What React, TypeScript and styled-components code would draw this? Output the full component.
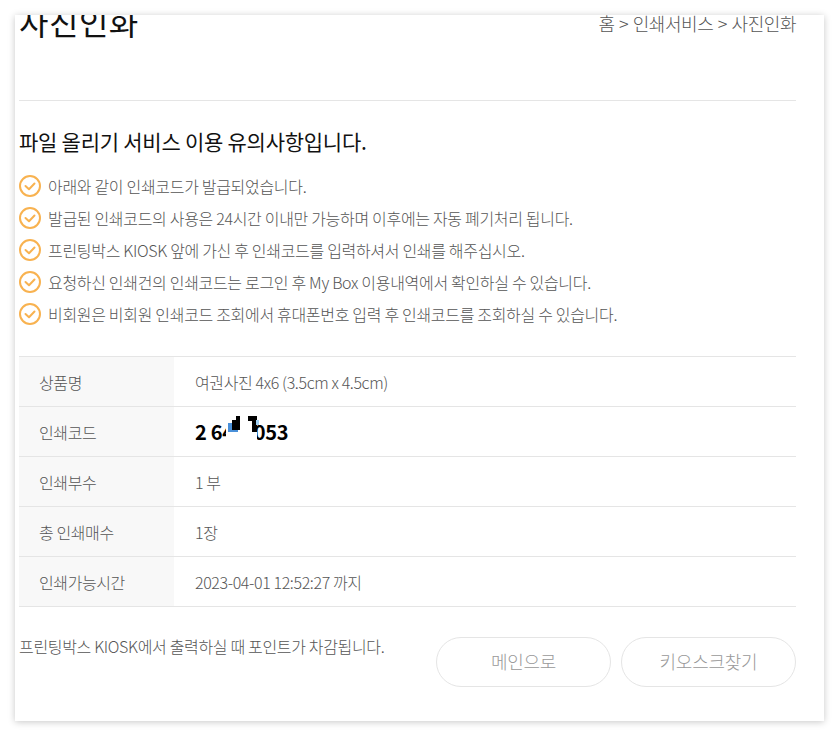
import styled, { createGlobalStyle } from "styled-components";

const GlobalStyle = createGlobalStyle`
    html, body {
        margin: 0;
        padding: 0;
        background: #fff;
        font-family: "Noto Sans CJK KR", "Noto Sans", sans-serif;
    }
`;

const Page = styled.div`
    width: 839px;
    height: 736px;
    padding: 15px;
    box-sizing: border-box;
`;

const Card = styled.div`
    height: 706px;
    width: 809px;
    box-sizing: border-box;
    padding: 0 28px 0 4px;
    background: #fff;
    overflow: hidden;
    box-shadow: 0 1px 7px rgba(0, 0, 0, 0.22);
`;

const Header = styled.div`
    display: flex;
    justify-content: space-between;
    align-items: flex-start;
    height: 86px;
    box-sizing: border-box;
    border-bottom: 1px solid #e5e5e5;
`;

const Title = styled.h1`
    margin: -17px 0 0 0;
    font-size: 32px;
    line-height: 46px;
    font-weight: 400;
    letter-spacing: 0.5px;
    color: #111;
`;

const Crumbs = styled.div`
    margin-top: -5px;
    font-size: 18px;
    line-height: 26px;
    font-weight: 300;
    letter-spacing: -0.45px;
    color: #555;
`;

const Sep = styled.span`
    margin: 0 1px;
`;

const Notice = styled.h2`
    margin: 26px 0 0 0;
    font-size: 21px;
    line-height: 28px;
    font-weight: 400;
    letter-spacing: -0.25px;
    color: #111;
`;

const NoteList = styled.ul`
    list-style: none;
    margin: 15px 0 0 0;
    padding: 0 0 26px 0;
    border-bottom: 1px solid #e5e5e5;
`;

const Note = styled.li`
    display: flex;
    align-items: center;
    gap: 7px;
    height: 32px;
    font-size: 16px;
    font-weight: 300;
    letter-spacing: -0.31px;
    color: #555;
`;

const Row = styled.div`
    display: flex;
    height: 50px;
    box-sizing: border-box;
    border-bottom: 1px solid #e5e5e5;
`;

const Label = styled.div`
    display: flex;
    align-items: center;
    width: 155px;
    box-sizing: border-box;
    padding-left: 20px;
    background: #f8f8f8;
    font-size: 16px;
    font-weight: 300;
    letter-spacing: -0.4px;
    color: #555;
`;

const Value = styled.div<{ $code?: boolean }>`
    position: relative;
    display: flex;
    align-items: center;
    padding-left: 21px;
    font-size: ${(p) => (p.$code ? "20px" : "16px")};
    font-weight: ${(p) => (p.$code ? 700 : 300)};
    letter-spacing: ${(p) => (p.$code ? "-0.3px" : "-0.38px")};
    color: ${(p) => (p.$code ? "#000" : "#555")};
`;

// the code is masked in the screenshot, a white patch with a few leftover blocks
const Redact = styled.span`
    position: absolute;
    left: 52px;
    top: 3px;
    width: 31px;
    height: 36px;
    background: #fff;
`;

const Speck = styled.span<{ $color: string; $x: number; $y: number; $w: number; $h: number }>`
    position: absolute;
    left: ${(p) => p.$x}px;
    top: ${(p) => p.$y}px;
    width: ${(p) => p.$w}px;
    height: ${(p) => p.$h}px;
    background: ${(p) => p.$color};
`;

const Footer = styled.div`
    display: flex;
    justify-content: space-between;
    align-items: flex-start;
    margin-top: 30px;
`;

const FootText = styled.p`
    margin: -2px 0 0 0;
    font-size: 16px;
    line-height: 22px;
    font-weight: 300;
    letter-spacing: -0.33px;
    color: #555;
`;

const Buttons = styled.div`
    display: flex;
    gap: 10px;
`;

const PillButton = styled.button`
    width: 175px;
    height: 50px;
    box-sizing: border-box;
    border: 1px solid #e5e5e5;
    border-radius: 25px;
    background: #fff;
    font-family: inherit;
    font-size: 18px;
    font-weight: 300;
    letter-spacing: -0.25px;
    line-height: 24px;
    padding: 0 0 2px;
    color: #999;
`;

const CheckSvg = styled.svg`
    flex-shrink: 0;
`;

function CheckIcon() {
    return (
        <CheckSvg width="22" height="22" viewBox="0 0 22 22" fill="none" stroke="#f8b250" strokeWidth="2" strokeLinecap="round" strokeLinejoin="round">
            <circle cx="11" cy="11" r="10" />
            <path d="M6.5 11 L10 14.2 L15.5 8.5" />
        </CheckSvg>
    );
}

const notes = [
    "아래와 같이 인쇄코드가 발급되었습니다.",
    "발급된 인쇄코드의 사용은 24시간 이내만 가능하며 이후에는 자동 폐기처리 됩니다.",
    "프린팅박스 KIOSK 앞에 가신 후 인쇄코드를 입력하셔서 인쇄를 해주십시오.",
    "요청하신 인쇄건의 인쇄코드는 로그인 후 My Box 이용내역에서 확인하실 수 있습니다.",
    "비회원은 비회원 인쇄코드 조회에서 휴대폰번호 입력 후 인쇄코드를 조회하실 수 있습니다.",
];

const specks = [
    { c: "#4a90d9", x: 54, y: 16, w: 10, h: 9 },
    { c: "#000", x: 62, y: 9, w: 4, h: 7 },
    { c: "#000", x: 58, y: 13, w: 8, h: 10 },
    { c: "#000", x: 74, y: 9, w: 9, h: 5 },
    { c: "#000", x: 78, y: 14, w: 5, h: 11 },
    { c: "#9fd0f5", x: 82, y: 13, w: 3, h: 5 },
];

export default function App() {
    return (
        <Page>
            <GlobalStyle />
            <Card>
                <Header>
                    <Title>사진인화</Title>
                    <Crumbs>
                        홈 <Sep>&gt;</Sep> 인쇄서비스 <Sep>&gt;</Sep> 사진인화
                    </Crumbs>
                </Header>
                <Notice>파일 올리기 서비스 이용 유의사항입니다.</Notice>
                <NoteList>
                    {notes.map((n) => (
                        <Note key={n}>
                            <CheckIcon />
                            {n}
                        </Note>
                    ))}
                </NoteList>
                <Row>
                    <Label>상품명</Label>
                    <Value>여권사진 4x6 (3.5cm x 4.5cm)</Value>
                </Row>
                <Row>
                    <Label>인쇄코드</Label>
                    <Value $code>
                        2 64 1 053
                        <Redact />
                        {specks.map((s) => (
                            <Speck key={`${s.x}-${s.y}`} $color={s.c} $x={s.x} $y={s.y} $w={s.w} $h={s.h} />
                        ))}
                    </Value>
                </Row>
                <Row>
                    <Label>인쇄부수</Label>
                    <Value>1 부</Value>
                </Row>
                <Row>
                    <Label>총 인쇄매수</Label>
                    <Value>1장</Value>
                </Row>
                <Row>
                    <Label>인쇄가능시간</Label>
                    <Value>2023-04-01 12:52:27 까지</Value>
                </Row>
                <Footer>
                    <FootText>프린팅박스 KIOSK에서 출력하실 때 포인트가 차감됩니다.</FootText>
                    <Buttons>
                        <PillButton>메인으로</PillButton>
                        <PillButton>키오스크찾기</PillButton>
                    </Buttons>
                </Footer>
            </Card>
        </Page>
    );
}
